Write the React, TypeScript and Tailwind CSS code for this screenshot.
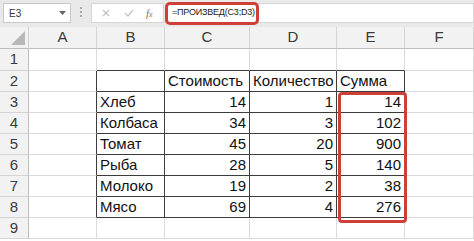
import React from "react";

const cols = ["A", "B", "C", "D", "E", "F"];

type Cell = { v: string; right?: boolean };

const data: Record<number, Record<string, Cell>> = {
  2: { C: { v: "Стоимость" }, D: { v: "Количество" }, E: { v: "Сумма" } },
  3: { B: { v: "Хлеб" }, C: { v: "14", right: true }, D: { v: "1", right: true }, E: { v: "14", right: true } },
  4: { B: { v: "Колбаса" }, C: { v: "34", right: true }, D: { v: "3", right: true }, E: { v: "102", right: true } },
  5: { B: { v: "Томат" }, C: { v: "45", right: true }, D: { v: "20", right: true }, E: { v: "900", right: true } },
  6: { B: { v: "Рыба" }, C: { v: "28", right: true }, D: { v: "5", right: true }, E: { v: "140", right: true } },
  7: { B: { v: "Молоко" }, C: { v: "19", right: true }, D: { v: "2", right: true }, E: { v: "38", right: true } },
  8: { B: { v: "Мясо" }, C: { v: "69", right: true }, D: { v: "4", right: true }, E: { v: "276", right: true } },
};

function GridCell({ row, col }: { row: number; col: string }) {
  const inTableRows = row >= 2 && row <= 8;
  const rightDark = inTableRows && ["A", "B", "C", "D", "E"].includes(col);
  const bottomDark = row >= 1 && row <= 8 && ["B", "C", "D", "E"].includes(col);
  const cell = data[row]?.[col];
  return (
    <div
      className={
        "flex items-center overflow-hidden whitespace-nowrap border-b border-r px-[3px] text-[15px] text-[#111] " +
        (rightDark ? "border-r-[#3c3c3c] " : "border-r-[#dadada] ") +
        (bottomDark ? "border-b-[#3c3c3c] " : "border-b-[#dadada] ") +
        (cell?.right ? "justify-end" : "justify-start")
      }
    >
      {cell?.v}
    </div>
  );
}

export default function App() {
  const rows = [1, 2, 3, 4, 5, 6, 7, 8, 9];
  return (
    <div
      className="w-[474px] h-[241px] overflow-hidden bg-white"
      style={{ fontFamily: '"Liberation Sans", Arial, sans-serif' }}
    >
      {/* Formula bar */}
      <div className="flex h-[27px] items-start bg-[#e9e9e9] pt-[3px]">
        <div className="ml-[3px] flex h-[20px] w-[68px] items-center justify-between border border-[#c8c8c8] bg-white pl-[5px] pr-[4px] text-[10px] text-[#333]">
          <span>E3</span>
          <svg width="7" height="4" viewBox="0 0 7 4">
            <path d="M0 0 L7 0 L3.5 4 Z" fill="#666" />
          </svg>
        </div>
        <div className="ml-[9px] mt-[4px] flex flex-col gap-[2px]">
          <div className="h-[2px] w-[2px] bg-[#a8a8a8]" />
          <div className="h-[2px] w-[2px] bg-[#a8a8a8]" />
          <div className="h-[2px] w-[2px] bg-[#a8a8a8]" />
        </div>
        <div className="ml-[9px] flex h-[20px] w-[73px] items-center border border-[#d6d6d6] bg-white text-[#b5b5b5]">
          <svg className="ml-[10px]" width="8" height="8" viewBox="0 0 8 8">
            <path d="M1 1 L7 7 M7 1 L1 7" stroke="#c2c2c2" strokeWidth="1.2" />
          </svg>
          <svg className="ml-[14px]" width="10" height="8" viewBox="0 0 10 8">
            <path d="M1 4 L4 7 L9 1" stroke="#c2c2c2" strokeWidth="1.2" fill="none" />
          </svg>
          <span
            className="ml-[12px] text-[11px] italic text-[#777]"
            style={{ fontFamily: '"Liberation Serif", serif' }}
          >
            f<span className="text-[8px]">x</span>
          </span>
        </div>
        <div className="ml-[1px] flex h-[20px] flex-1 items-center border border-[#d6d6d6] bg-white">
          <div className="-ml-[1px] flex h-[23px] w-[94px] items-center whitespace-nowrap rounded-[5px] border-[3px] border-[#cf3f3a] pl-[4px] text-[9px] tracking-[-0.2px] text-[#222]">
            =ПРОИЗВЕД(C3;D3)
          </div>
        </div>
      </div>

      {/* Sheet grid */}
      <div className="relative grid grid-cols-[29px_68px_68px_85px_87px_68px_1fr] grid-rows-[22px_22px_21px_21px_21px_21px_21px_21px_21px_21px]">
        {/* corner */}
        <div className="relative border-b border-r border-b-[#bdbdbd] border-r-[#d0d0d0] bg-[#f2f2f2]">
          <svg className="absolute bottom-[3px] right-[3px]" width="14" height="14" viewBox="0 0 14 14">
            <path d="M14 0 L14 14 L0 14 Z" fill="#b8b8b8" />
          </svg>
        </div>
        {cols.map((c) => (
          <div
            key={c}
            className="flex items-center justify-center border-b border-r border-b-[#bdbdbd] border-r-[#d4d4d4] bg-[#f2f2f2] text-[15px] text-[#3a3a3a]"
          >
            {c}
          </div>
        ))}
        {rows.map((r) => (
          <React.Fragment key={r}>
            <div className="flex items-center justify-center border-b border-r border-b-[#d4d4d4] border-r-[#bdbdbd] bg-[#f2f2f2] text-[15px] text-[#3a3a3a]">
              {r}
            </div>
            {cols.map((c) => (
              <GridCell key={c} row={r} col={c} />
            ))}
          </React.Fragment>
        ))}
        {/* red highlight over E3:E8 */}
        <div className="pointer-events-none absolute left-[338px] top-[65px] h-[131px] w-[69px] rounded-[4px] border-[3px] border-[#cf3f3a]" />
      </div>
    </div>
  );
}
